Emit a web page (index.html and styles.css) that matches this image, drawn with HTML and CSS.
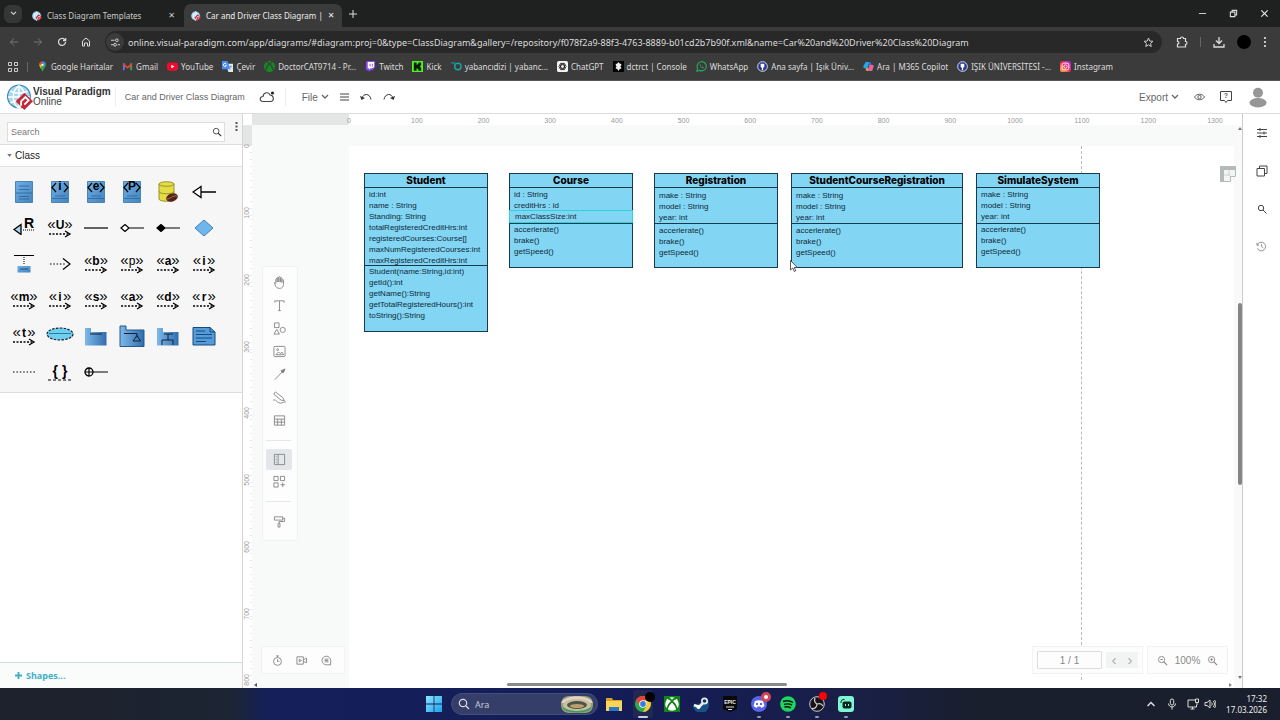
FILE: index.html
```html
<!DOCTYPE html>
<html lang="en">
<head>
<meta charset="utf-8">
<title>Car and Driver Class Diagram | Visual Paradigm Online</title>
<link rel="stylesheet" href="styles.css">
</head>
<body>
<svg class="defs" aria-hidden="true">
  <defs>
    <linearGradient id="blue" x1="0" y1="0" x2="1" y2="1"><stop offset="0" stop-color="#6fb0e6"/><stop offset="1" stop-color="#4483bd"/></linearGradient>
    <linearGradient id="folder" x1="0" y1="0" x2="1" y2="0"><stop offset="0" stop-color="#80b8e8"/><stop offset="1" stop-color="#2f6dae"/></linearGradient>
    <linearGradient id="insta" x1="0" y1="1" x2="1" y2="0"><stop offset="0" stop-color="#ffc233"/><stop offset=".5" stop-color="#f2265d"/><stop offset="1" stop-color="#a227e0"/></linearGradient>
    <linearGradient id="win" x1="0" y1="0" x2="1" y2="1"><stop offset="0" stop-color="#8be4fd"/><stop offset="1" stop-color="#1ba3ea"/></linearGradient>
    <symbol id="vp" viewBox="0 0 24 24">
      <circle cx="11" cy="11.500" r="10.500" fill="#a9d8ec" stroke="#3b8fb8" stroke-width="1.200"/>
      <path d="M1 12h20M11 1.500v21M3 6.500c5 2.500 11 2.500 16 0M3 17.500c5-2.500 11-2.500 16 0M11 1.500c-7 5-7 16 0 21M11 1.500c7 5 7 16 0 21" fill="none" stroke="#fff" stroke-width="1.300"/>
      <path d="M16 8l8 8-8 8-8-8z" fill="#c3283a"/>
      <path d="M13 20v-4l4-4 3 3-4 4" fill="none" stroke="#fff" stroke-width="1.700"/>
    </symbol>
    <symbol id="arrow" viewBox="0 0 24 8"><path d="M1 4h19" stroke="#000" stroke-width="1.400" stroke-dasharray="2 1.500"/><path d="M17 1l5 3-5 3" fill="none" stroke="#000" stroke-width="1.300"/></symbol>
    <symbol id="classbox" viewBox="0 0 18 22"><path d="M.5.5h17v21H.5z" fill="url(#blue)" stroke="#4a84b8"/><path d="M4 5h10M4 8.500h10M1 12h16M4 15.500h10M4 18h10" stroke="#2f6294" stroke-width=".8"/></symbol>
    <symbol id="angles" viewBox="0 0 18 22"><path d="M.5.5h17v21H.5z" fill="url(#blue)" stroke="#4a84b8"/><path d="M4 15h10M1 17.500h16" stroke="#2f6294" stroke-width=".8"/><path d="M5 2L1 6.500 5 11M13 2l4 4.500-4 4.500" fill="none" stroke="#000" stroke-width="1.200"/></symbol>
    <symbol id="lens" viewBox="0 0 12 12"><circle cx="5" cy="5" r="3.400" fill="none" stroke="currentColor"/><path d="M7.500 7.500L11 11" stroke="currentColor" stroke-width="1.300"/></symbol>
    <symbol id="crest" viewBox="0 0 12 12"><circle cx="6" cy="6" r="5.300" fill="#28368f" stroke="#e4e7f7"/><path d="M4 3h4v3.500L6 8 4 6.500zM5.300 7h1.400v3H5.300z" fill="#fff"/></symbol>
    <symbol id="chev" viewBox="0 0 8 6"><path d="M1 1l3 3 3-3" fill="none" stroke="currentColor" stroke-width="1.300"/></symbol>
  </defs>
</svg>

<header class="browser">
  <div class="tabs">
    <button class="tab-menu" aria-label="Search tabs"><svg width="7" height="5"><use href="#chev"/></svg></button>
    <div class="tab">
      <svg width="10" height="10"><use href="#vp"/></svg><span class="tab-title">Class Diagram Templates</span><button class="plain" aria-label="Close tab">✕</button>
    </div>
    <div class="tab active">
      <svg width="10" height="10"><use href="#vp"/></svg><span class="tab-title">Car and Driver Class Diagram |</span><button class="plain" aria-label="Close tab">✕</button>
    </div>
    <button class="plain new-tab" aria-label="New tab"><svg viewBox="0 0 8 8" width="8" height="8"><path d="M4 0v8M0 4h8" stroke="#ddd"/></svg></button>
    <div class="win-buttons">
      <button class="plain" aria-label="Minimize"><svg viewBox="0 0 10 10" width="9" height="9"><path d="M1 5h8" stroke="#ddd"/></svg></button>
      <button class="plain" aria-label="Restore"><svg viewBox="0 0 10 10" width="9" height="9"><path d="M1.500 3.500h5v5h-5zM3.500 3V1.500h5v5H7" fill="none" stroke="#ddd" stroke-width="1.200"/></svg></button>
      <button class="plain" aria-label="Close"><svg viewBox="0 0 10 10" width="9" height="9"><path d="M1.500 1.500l7 7M8.500 1.500l-7 7" stroke="#eee" stroke-width="1.200"/></svg></button>
    </div>
  </div>
  <div class="nav">
    <button class="plain" aria-label="Back"><svg viewBox="0 0 10 10" width="10" height="10"><path d="M9 5H1.500M5 1.500L1.500 5 5 8.500" fill="none" stroke="#777"/></svg></button>
    <button class="plain" aria-label="Forward"><svg viewBox="0 0 10 10" width="10" height="10"><path d="M1 5h7.500M5 1.500L8.500 5 5 8.500" fill="none" stroke="#777"/></svg></button>
    <button class="plain" aria-label="Reload"><svg viewBox="0 0 10 10" width="10" height="10"><path d="M8.500 5a3.500 3.500 0 1 1-1-2.500L8.500 3.500M8.700 1v2.700H6" fill="none" stroke="#ddd" stroke-width="1.200"/></svg></button>
    <button class="plain" aria-label="Home"><svg viewBox="0 0 10 10" width="10" height="10"><path d="M1.500 9V4L5 1l3.500 3v5h-2V6h-3v3z" fill="none" stroke="#ddd"/></svg></button>
    <div class="omnibox">
      <button class="site" aria-label="Site information"><svg viewBox="0 0 10 10" width="9" height="9"><path d="M0 2.500h4M7.500 7.500H10M0 7.500h3" stroke="#ddd"/><circle cx="6.500" cy="2.500" r="1.500" fill="none" stroke="#ddd"/><circle cx="4.500" cy="7.500" r="1.500" fill="none" stroke="#ddd"/></svg></button>
      <input class="url" aria-label="Address" value="online.visual-paradigm.com/app/diagrams/#diagram:proj=0&amp;type=ClassDiagram&amp;gallery=/repository/f078f2a9-88f3-4763-8889-b01cd2b7b90f.xml&amp;name=Car%20and%20Driver%20Class%20Diagram">
      <button class="plain" aria-label="Bookmark"><svg viewBox="0 0 12 12" width="11" height="11"><path d="M6 1.200l1.400 3.200 3.400.3-2.600 2.300.8 3.400L6 8.600l-3 1.800.8-3.400L1.200 4.700l3.400-.3z" fill="none" stroke="#ddd"/></svg></button>
    </div>
    <div class="nav-right">
      <button class="plain" aria-label="Extensions"><svg viewBox="0 0 12 12" width="12" height="12"><path d="M1.500 2.500h3c0-2 3-2 3 0h2v3c2 0 2 3 0 3v2.500h-8V8c2 0 2-2.500 0-2.500z" fill="none" stroke="#ddd" stroke-width="1.200"/></svg></button>
      <i class="bar"></i>
      <button class="plain" aria-label="Downloads"><svg viewBox="0 0 12 12" width="12" height="12"><path d="M6 1v6M3 4.500l3 3 3-3M1 8v3h10V8" fill="none" stroke="#ddd" stroke-width="1.300"/></svg></button>
      <button class="profile" aria-label="Profile"></button>
      <button class="plain" aria-label="Menu"><svg viewBox="0 0 4 12" width="4" height="12"><path d="M2 1v2M2 5v2M2 9v2" stroke="#ddd" stroke-width="1.700"/></svg></button>
    </div>
  </div>
  <nav class="bookmarks">
    <button class="plain" aria-label="Apps"><svg viewBox="0 0 10 10" width="10" height="10"><path d="M.5.5h3v3h-3zM6.500.5h3v3h-3zM.5 6.500h3v3h-3zM6.500 6.500h3v3h-3z" fill="none" stroke="#ccc"/></svg></button>
    <i class="bar"></i>
    <a href="#"><svg viewBox="0 0 12 12"><path d="M6 12C5.500 9 2.500 7.500 2.500 4.200A3.500 3.500 0 0 1 6 .5a3.500 3.500 0 0 1 3.500 3.700C9.500 7.500 6.500 9 6 12z" fill="#34a853"/><path d="M2.500 4.200A3.500 3.500 0 0 1 6 .5v3.700z" fill="#ea4335"/><path d="M6 .5a3.500 3.500 0 0 1 3.500 3.700H6z" fill="#4285f4"/><path d="M2.500 4.200H6L4 8z" fill="#fbbc04"/><circle cx="6" cy="4.200" r="1.200" fill="#fff"/></svg>Google Haritalar</a>
    <a href="#"><svg viewBox="0 0 12 12"><path d="M1 2.500h2V10H1z" fill="#4285f4"/><path d="M9 2.500h2V10H9z" fill="#34a853"/><path d="M1 2l5 4 5-4v2.500L6 8.500l-5-4z" fill="#ea4335"/></svg>Gmail</a>
    <a href="#"><svg viewBox="0 0 12 12"><rect y="1.500" width="12" height="9" rx="2.500" fill="#f10b2b"/><path d="M4.700 4l3.500 2-3.500 2z" fill="#fff"/></svg>YouTube</a>
    <a href="#"><svg viewBox="0 0 12 12"><path d="M4 3h8v9H7z" fill="#e5e7ea"/><path d="M0 0h6l3 9H0z" fill="#4b8bf5"/><path d="M4.500 3.200a1.700 1.700 0 1 0 .3 1.600H3.500" fill="none" stroke="#fff"/><path d="M8 6h3M9.500 5l-1 4" stroke="#5a7eb5" stroke-width=".7"/></svg>Çevir</a>
    <a href="#"><svg viewBox="0 0 12 12"><circle cx="6" cy="6" r="6" fill="#168a22"/><path d="M2 10c1-4 2.500-6 4-7 1.500 1 3 3 4 7M3 1.500c1.500 0 3 1.500 3 1.500s1.500-1.500 3-1.500" fill="none" stroke="#30463a" stroke-width="1.600"/></svg>DoctorCAT9714 - Pr...</a>
    <a href="#"><svg viewBox="0 0 12 12"><path d="M2 0h9v7l-3 3H6l-2 2v-2H1V2z" fill="#8b45f7"/><path d="M3 1h7v5.500L8 8H6L4.500 9.500V8H3z" fill="#fff"/><path d="M5.500 3v3M8 3v3" stroke="#8b45f7"/></svg>Twitch</a>
    <a href="#"><svg viewBox="0 0 12 12"><path d="M0 0h12v12H0z" fill="#4df51d"/><path d="M2 1.500h3V4h1V3h1V1.500h3V5H9v2h1v3.500H7V9H6V8H5v2.500H2z" fill="#101b0d"/></svg>Kick</a>
    <a href="#"><svg viewBox="0 0 12 12"><path d="M0 2h4l1 3" fill="none" stroke="#13918c" stroke-width="1.500"/><circle cx="7.500" cy="6" r="3.500" fill="none" stroke="#19a39d" stroke-width="1.600"/></svg>yabancıdizi | yabanc...</a>
    <a href="#"><svg viewBox="0 0 12 12"><rect width="12" height="12" rx="2" fill="#f4f4f4"/><g fill="none" stroke="#222" stroke-width=".9"><ellipse cx="6" cy="6" rx="4" ry="2"/><ellipse cx="6" cy="6" rx="4" ry="2" transform="rotate(60 6 6)"/><ellipse cx="6" cy="6" rx="4" ry="2" transform="rotate(120 6 6)"/></g></svg>ChatGPT</a>
    <a href="#"><svg viewBox="0 0 12 12"><path d="M0 0h12v12H0z"/><path d="M6 1l1.500 2H9v2L8 6l1 1v1.500H7.500L6 11 4.500 8.500H3V7l1-1-1-1V3h1.500z" fill="#eee"/></svg>dctrct | Console</a>
    <a href="#"><svg viewBox="0 0 12 12"><path d="M1 11l.8-3A5 5 0 1 1 4 10.200z" fill="none" stroke="#24a75a" stroke-width="1.300"/><path d="M4 4c0 2 2 4 4 4l.5-1.200-1.500-.7-.7.700C5.500 6.500 5 6 5 5.300L5.500 5 5 3.500z" fill="#24a75a"/></svg>WhatsApp</a>
    <a href="#"><svg viewBox="0 0 12 12"><use href="#crest"/></svg>Ana sayfa | Işık Üniv...</a>
    <a href="#"><svg viewBox="0 0 12 12"><path d="M3 1h4L5 8H2C0 8 0 6 1 4z" fill="#23a8e6"/><path d="M7 1c2 0 2 1 2 3H6z" fill="#3669d9"/><path d="M7 4h3c2 0 2 2 1 4l-1 3H5z" fill="#e661a0"/><path d="M3 8h3l-1 3C3 11 3 10 3 8z" fill="#f0a83d"/></svg>Ara | M365 Copilot</a>
    <a href="#"><svg viewBox="0 0 12 12"><use href="#crest"/></svg>IŞIK ÜNİVERSİTESİ -...</a>
    <a href="#"><svg viewBox="0 0 12 12"><rect width="12" height="12" rx="2.500" fill="url(#insta)"/><rect x="2.300" y="2.300" width="7.400" height="7.400" rx="2" fill="none" stroke="#fff"/><circle cx="6" cy="6" r="1.800" fill="none" stroke="#fff"/></svg>Instagram</a>
  </nav>
</header>

<div class="app">
  <header class="app-bar">
    <a class="brand" href="#"><svg width="26" height="26"><use href="#vp"/></svg><span><b>Visual Paradigm</b>Online</span></a>
    <span class="doc-name">Car and Driver Class Diagram</span>
    <svg class="cloud" viewBox="0 0 16 12" width="16" height="12"><path d="M4 10.500c-4 0-3.500-5 0-5C4.500 1 10 .5 11 4c4 0 4.500 6 1 6.500z" fill="none" stroke="#444" stroke-width="1.100"/><circle cx="13.500" cy="2" r="1.600" fill="#222"/></svg>
    <div class="file-tools">
      <button class="menu-btn">File <svg width="8" height="6"><use href="#chev"/></svg></button>
      <button class="plain" aria-label="Menu"><svg viewBox="0 0 9 8" width="9" height="8"><path d="M0 1h9M0 4h9M0 7h9" stroke="#444"/></svg></button>
      <button class="plain" aria-label="Undo"><svg viewBox="0 0 12 10" width="12" height="10"><path d="M2 6.500C3 1 10 1 11 7.500" fill="none" stroke="#333"/><path d="M0 4l1.500 4L5 6z" fill="#333"/></svg></button>
      <button class="plain" aria-label="Redo"><svg viewBox="0 0 12 10" width="12" height="10"><path d="M10 6.500C9 1 2 1 1 7.500" fill="none" stroke="#333"/><path d="M12 4l-1.500 4L7 6z" fill="#333"/></svg></button>
    </div>
    <div class="app-right">
      <button class="menu-btn">Export <svg width="8" height="6"><use href="#chev"/></svg></button>
      <button class="plain" aria-label="Preview"><svg viewBox="0 0 12 8" width="11" height="8"><path d="M.5 4C3 0 9 0 11.500 4 9 8 3 8 .5 4z" fill="none" stroke="#555"/><circle cx="6" cy="4" r="1.800" fill="none" stroke="#555"/></svg></button>
      <button class="plain help" aria-label="Help"><svg viewBox="0 0 12 12" width="12" height="12"><path d="M.5.5h11v9H7.500L6 11.500 4.500 9.500h-4z" fill="none" stroke="#444"/></svg><b>?</b></button>
      <svg class="avatar" viewBox="0 0 18 22" width="18" height="21"><circle cx="9" cy="6" r="5.200" fill="#969696"/><ellipse cx="9" cy="16.500" rx="9" ry="5" fill="#969696"/></svg>
    </div>
  </header>

  <div class="body">
    <aside class="sidebar">
      <div class="search-row">
        <label class="search"><input type="text" placeholder="Search" aria-label="Search shapes"><svg width="10" height="10"><use href="#lens"/></svg></label>
        <button class="plain" aria-label="Options"><svg viewBox="0 0 3 9" width="3" height="9"><path d="M1.500 0v2M1.500 3.500v2M1.500 7v2" stroke="#555" stroke-width="2"/></svg></button>
      </div>
      <button class="section"><svg viewBox="0 0 6 4" width="5" height="3"><path d="M0 0h6L3 4z" fill="#777"/></svg>Class</button>
      <div class="palette">
        <div class="shape"><svg width="18" height="22"><use href="#classbox"/></svg></div>
        <div class="shape over"><svg width="18" height="22"><use href="#angles"/></svg><b>i</b></div>
        <div class="shape over"><svg width="18" height="22"><use href="#angles"/></svg><b>e</b></div>
        <div class="shape over"><svg width="18" height="22"><use href="#angles"/></svg><b>P</b></div>
        <div class="shape"><svg viewBox="0 0 20 22" width="20" height="22"><path d="M1 3c0-3 15-3 15 0v15c0 3-15 3-15 0z" fill="#e3dc45" stroke="#98922a"/><path d="M1 3c0 3 15 3 15 0M1 10.500c0 3 15 3 15 0" fill="none" stroke="#98922a"/><ellipse cx="14" cy="16.500" rx="6" ry="4" fill="#542313" transform="rotate(-20 14 16.500)"/><path d="M9 18c3 0 6-4 10-3" fill="none" stroke="#a8735a"/></svg></div>
        <div class="shape"><svg viewBox="0 0 24 14" width="24" height="14"><path d="M1 7l8-5.500v11zM9 7h15" fill="#fff" stroke="#000" stroke-width="1.300"/></svg></div>

        <div class="shape real"><svg viewBox="0 0 22 14" width="22" height="14"><path d="M1 8.500l7-5v10z" fill="#a8d5f2" stroke="#000" stroke-width="1.300"/><path d="M10 9h12" stroke="#000" stroke-dasharray="1 1"/></svg><b>R</b></div>
        <div class="shape dep"><span>«<b>U</b>»</span><svg width="24" height="8"><use href="#arrow"/></svg></div>
        <div class="shape"><svg viewBox="0 0 24 4" width="24" height="4"><path d="M0 2h24" stroke="#000" stroke-width="1.200"/></svg></div>
        <div class="shape"><svg viewBox="0 0 24 8" width="24" height="8"><path d="M1 4l4-3.500 4 3.500-4 3.500zM9 4h15" fill="#fff" stroke="#000" stroke-width="1.200"/></svg></div>
        <div class="shape"><svg viewBox="0 0 24 8" width="24" height="8"><path d="M1 4l4-3.500 4 3.500-4 3.500zM9 4h15" stroke="#000" stroke-width="1.200"/></svg></div>
        <div class="shape"><svg viewBox="0 0 20 18" width="20" height="18"><path d="M10 1l9 8-9 8-9-8z" fill="#6eb6ec" stroke="#3c7fb8"/></svg></div>

        <div class="shape"><svg viewBox="0 0 20 20" width="20" height="20"><path d="M0 1.500h20" stroke="#000"/><path d="M10 3v8" stroke="#000" stroke-dasharray="1 1"/><path d="M3.500 12h13v6.500h-13z" fill="url(#blue)"/><path d="M6 15h8" stroke="#234f7c"/></svg></div>
        <div class="shape"><svg viewBox="0 0 22 14" width="22" height="14"><path d="M1 7h15" stroke="#000" stroke-width="1.200" stroke-dasharray="1.500 1.800"/><path d="M14 1.500L21 7l-7 5.500" fill="none" stroke="#000" stroke-width="1.200"/></svg></div>
        <div class="shape dep"><span>«<b>b</b>»</span><svg width="24" height="8"><use href="#arrow"/></svg></div>
        <div class="shape dep"><span>«<small>p</small>»</span><svg width="24" height="8"><use href="#arrow"/></svg></div>
        <div class="shape dep"><span>«<b>a</b>»</span><svg width="24" height="8"><use href="#arrow"/></svg></div>
        <div class="shape dep"><span>«&#8202;<b>i</b>&#8202;»</span><svg width="24" height="8"><use href="#arrow"/></svg></div>

        <div class="shape dep"><span>«<b>m</b>»</span><svg width="24" height="8"><use href="#arrow"/></svg></div>
        <div class="shape dep"><span>«&#8202;<b>i</b>&#8202;»</span><svg width="24" height="8"><use href="#arrow"/></svg></div>
        <div class="shape dep"><span>«<b>s</b>»</span><svg width="24" height="8"><use href="#arrow"/></svg></div>
        <div class="shape dep"><span>«<b>a</b>»</span><svg width="24" height="8"><use href="#arrow"/></svg></div>
        <div class="shape dep"><span>«<b>d</b>»</span><svg width="24" height="8"><use href="#arrow"/></svg></div>
        <div class="shape dep"><span>«&#8202;<b>r</b>&#8202;»</span><svg width="24" height="8"><use href="#arrow"/></svg></div>

        <div class="shape dep"><span>«&#8202;<b>t</b>&#8202;»</span><svg width="24" height="8"><use href="#arrow"/></svg></div>
        <div class="shape"><svg viewBox="0 0 28 18" width="28" height="18"><ellipse cx="14" cy="7" rx="13" ry="6" fill="#6fd0ee" stroke="#123" stroke-width="1.200" stroke-dasharray="2.500 1.300"/><path d="M3 6.500h22" stroke="#287fa0"/></svg></div>
        <div class="shape"><svg viewBox="0 0 24 20" width="24" height="20"><path d="M1 2h6v4h15.500v13.500H1z" fill="url(#folder)"/><path d="M6 8h12" stroke="#123"/></svg></div>
        <div class="shape"><svg viewBox="0 0 26 22" width="26" height="22"><path d="M1 1h6v4h18v16.500H1z" fill="url(#folder)" stroke="#23598f"/><path d="M5 8.500h13v4M18 10.500l-4 5.500h7.500z" fill="none" stroke="#123"/></svg></div>
        <div class="shape"><svg viewBox="0 0 24 20" width="24" height="20"><path d="M1 2h6v4h15.500v13.500H1z" fill="url(#folder)"/><path d="M8 8h9M12 8v6M6 19v-5h11v5" fill="none" stroke="#123"/></svg></div>
        <div class="shape"><svg viewBox="0 0 24 20" width="24" height="20"><path d="M1 1.500h17l5 4.500v13H1z" fill="#559bd9" stroke="#174b7c"/><path d="M18 1.500V6h5M4 5h9M4 8.500h16M4 12h16M4 15.500h10" fill="none" stroke="#174b7c"/></svg></div>

        <div class="shape"><svg viewBox="0 0 22 4" width="22" height="4"><path d="M0 2h22" stroke="#000" stroke-dasharray="1.500 1.900"/></svg></div>
        <div class="shape braces"><b>{ }</b><svg viewBox="0 0 24 2" width="24" height="2"><path d="M0 1h24" stroke="#000" stroke-dasharray="3 2"/></svg></div>
        <div class="shape"><svg viewBox="0 0 24 10" width="24" height="10"><path d="M1 5h23M5 1v8" stroke="#000" stroke-width="1.200"/><circle cx="5" cy="5" r="4" fill="none" stroke="#000" stroke-width="1.300"/></svg></div>
      </div>
      <button class="more-shapes"><svg viewBox="0 0 7 7" width="7" height="7"><path d="M3.500 0v7M0 3.500h7" stroke="#3fb0c4" stroke-width="1.800"/></svg>Shapes...</button>
    </aside>

    <main class="workspace">
      <div class="ruler-h">
        <i class="ruler-off"></i>
        <div class="ticks-h"><span>100</span><span>200</span><span>300</span><span>400</span><span>500</span><span>600</span><span>700</span><span>800</span><span>900</span><span>1000</span><span>1100</span><span>1200</span><span>1300</span></div>
        <b class="zero">0</b>
      </div>
      <div class="ruler-v">
        <i class="ruler-off"></i>
        <div class="ticks-v"><span>100</span><span>200</span><span>300</span><span>400</span><span>500</span><span>600</span><span>700</span><span>800</span></div>
        <b class="zero">0</b>
      </div>
      <div class="stage">
        <div class="sheet"></div>
        <i class="page-edge"></i>

        <section class="uml student">
          <h2>Student</h2>
          <ul><li>id:int</li><li>name : String</li><li>Standing: String</li><li>totalRegisteredCreditHrs:int</li><li>registeredCourses:Course[]</li><li>maxNumRegisteredCourses:int</li><li>maxRegisteredCreditHrs:int</li></ul>
          <ul><li>Student(name:String,id:int)</li><li>getId():int</li><li>getName():String</li><li>getTotalRegisteredHours():int</li><li>toString():String</li></ul>
        </section>
        <section class="uml course">
          <h2>Course</h2>
          <ul><li>id : String</li><li>creditHrs : id</li><li class="selected">maxClassSize:int</li></ul>
          <ul><li>accerlerate()</li><li>brake()</li><li>getSpeed()</li></ul>
        </section>
        <section class="uml low registration">
          <h2>Registration</h2>
          <ul><li>make : String</li><li>model : String</li><li>year: int</li></ul>
          <ul><li>accerlerate()</li><li>brake()</li><li>getSpeed()</li></ul>
        </section>
        <section class="uml low enrolment">
          <h2>StudentCourseRegistration</h2>
          <ul><li>make : String</li><li>model : String</li><li>year: int</li></ul>
          <ul><li>accerlerate()</li><li>brake()</li><li>getSpeed()</li></ul>
        </section>
        <section class="uml simulate">
          <h2>SimulateSystem</h2>
          <ul><li>make : String</li><li>model : String</li><li>year: int</li></ul>
          <ul><li>accerlerate()</li><li>brake()</li><li>getSpeed()</li></ul>
        </section>
        <svg class="cursor" viewBox="0 0 8 12" width="8" height="12"><path d="M.5.500v9.500l2.300-2 1.500 3.500 1.500-.7-1.500-3.300h3z" fill="#fff" stroke="#333" stroke-width=".8"/></svg>

        <div class="tools">
          <button aria-label="Pan"><svg viewBox="0 0 14 14"><path d="M3 8V3.500c0-1 1.500-1 1.500 0V6.500V2c0-1 1.700-1 1.700 0v4.500V1.500c0-1 1.700-1 1.700 0v5V2.500c0-1 1.700-1 1.700 0v4.500V4.500c0-1 1.700-1 1.700 0V9c0 5-6 5.500-8 2.500L1.500 8c-.5-1 .7-1.500 1.500-.5z"/></svg></button>
          <button aria-label="Text"><svg viewBox="0 0 14 14"><path d="M2 4V2h10v2M7 2v10.500M5.500 12.500h3"/></svg></button>
          <button aria-label="Shapes"><svg viewBox="0 0 14 14"><path d="M1.500 1h5v5h-5zM4 8l3 5H1z"/><circle cx="10.500" cy="8.500" r="2.800"/></svg></button>
          <button aria-label="Image"><svg viewBox="0 0 14 14"><rect x="1" y="1.500" width="12" height="11" rx="1"/><path d="M3 10.500l3-3 2 2 1.500-2 2 3z"/><circle cx="5" cy="5" r="1"/></svg></button>
          <button aria-label="Connector"><svg viewBox="0 0 14 14"><path d="M2 12.500L12 2" /><path d="M13 1L8.500 3l2.500 2.500z" fill="#777"/></svg></button>
          <button aria-label="Pen"><svg viewBox="0 0 14 14"><path d="M2.500 1l8 6 1.800 3.500-3.700-.7L1 3.500zM0 10c3-2 4 3 8 3 3 0 4-2 6-1"/></svg></button>
          <button aria-label="Table"><svg viewBox="0 0 14 14"><path d="M1.500 2h11v10h-11zM1.500 5.500h11M1.500 8.700h11M5 5.500V12M9 5.500V12"/></svg></button>
          <hr>
          <button class="on" aria-label="Panel"><svg viewBox="0 0 14 14"><path d="M1.500 1.500h11v11h-11zM5.500 1.500v11M3 4h1M3 7h1M3 10h1"/></svg></button>
          <button aria-label="Add shapes"><svg viewBox="0 0 14 14"><path d="M1 1.500h4.500V6H1zM8 1.500h4.500V6H8zM1 8.500h4.500V13H1zM10.500 8v5M8 10.500h5"/></svg></button>
          <hr>
          <button class="format" aria-label="Format painter"><svg viewBox="0 0 14 14"><path d="M1.500 2h9v3.500h-9zM10.500 3.500h2V7H6.500v2M5.500 9h2v4h-2z"/></svg></button>
        </div>

        <div class="record">
          <button class="plain" aria-label="Timer"><svg viewBox="0 0 12 12"><circle cx="6" cy="7" r="4.300"/><path d="M6 4.500V7h2M4.500 1h3M6 1v1.500"/></svg></button>
          <button class="plain" aria-label="Video"><svg viewBox="0 0 12 12"><path d="M1 2h7v8H1zM8 5l3.500-1.500v5L8 7M3.500 4.500v3L6 6z"/></svg></button>
          <button class="plain" aria-label="Comments"><svg viewBox="0 0 12 12"><path d="M10.500 11V6A4.700 4.700 0 1 0 6 10.700h4.500M4 4.500h4M4 6h4M4 7.500h4"/></svg></button>
        </div>

        <div class="pager">
          <input aria-label="Page" value="1 / 1">
          <div class="steps"><button aria-label="Previous page">‹</button><button aria-label="Next page">›</button></div>
        </div>
        <div class="zoomer">
          <button class="plain" aria-label="Zoom out"><svg viewBox="0 0 12 12" width="11" height="11"><use href="#lens"/><path d="M3.500 5h3" stroke="#888"/></svg></button>
          <span>100%</span>
          <button class="plain" aria-label="Zoom in"><svg viewBox="0 0 12 12" width="11" height="11"><use href="#lens"/><path d="M3.500 5h3M5 3.500v3" stroke="#888"/></svg></button>
        </div>
        <svg class="sticky" viewBox="0 0 16 16" width="16" height="16"><path d="M0 0h16v10l-6 6H0z" fill="#b4bab7"/><path d="M4 4h11v6h-5v5H4z" fill="#f3f5f4"/><path d="M4 9h6M9 4v6" stroke="#cdd2cf"/><path d="M11 15v-4h4z" fill="#fff"/></svg>
        <i class="thumb-h"></i>
        <i class="arr left"></i><i class="arr right"></i>
      </div>
      <div class="scroll-v"><i class="arr up"></i><i class="thumb-v"></i><i class="arr down"></i></div>
    </main>

    <aside class="rail">
      <button class="plain" aria-label="Properties"><svg viewBox="0 0 12 12"><path d="M1 2.500h10M1 6h10M1 9.500h10M4 1v3M8 4.500v3M4 8v3"/></svg></button>
      <button class="plain" aria-label="Pages"><svg viewBox="0 0 12 12"><path d="M1 3.500h7.500V11H1zM3.500 3V1H11v7.500H9"/></svg></button>
      <button class="plain" aria-label="Find"><svg viewBox="0 0 12 12"><circle cx="5" cy="5" r="2.700"/><path d="M7 7l3.500 3.500"/></svg></button>
      <button class="plain light" aria-label="History"><svg viewBox="0 0 12 12"><path d="M1.500 4A4.700 4.700 0 1 1 1.500 8M1 2v2.500h2.500M6 3.500V6l2 1.500"/></svg></button>
    </aside>
  </div>
</div>

<footer class="taskbar">
  <div class="dock">
    <button class="plain" aria-label="Start"><svg viewBox="0 0 16 16"><path d="M0 0h7.600v7.600H0zM8.400 0H16v7.600H8.400zM0 8.400h7.600V16H0zM8.400 8.400H16V16H8.400z" fill="url(#win)"/></svg></button>
    <label class="task-search"><svg viewBox="0 0 12 12" width="12" height="12"><circle cx="5" cy="5" r="3.700" fill="none" stroke="#dde" stroke-width="1.200"/><path d="M8 8l3 3" stroke="#dde" stroke-width="1.300"/></svg><input type="text" placeholder="Ara" aria-label="Ara"><svg class="stadium" viewBox="0 0 32 17" width="32" height="17"><rect width="32" height="17" rx="7" fill="#8aa07a"/><path d="M0 7c3-9 29-9 32 0z" fill="#e8cfc4"/><ellipse cx="16" cy="9" rx="14" ry="6" fill="#c8bfa0"/><ellipse cx="16" cy="9" rx="10" ry="4" fill="#4e5547"/><ellipse cx="16" cy="10" rx="7" ry="2" fill="#b9a26b"/><path d="M2 12c6 5 22 5 28 0" fill="none" stroke="#3f9a5b" stroke-width="1.500"/></svg></label>
    <button class="plain" aria-label="Files"><svg viewBox="0 0 16 16"><path d="M0 2h6l1 2h9v11H0z" fill="#dba125"/><path d="M0 5h16v10H0z" fill="#fcd45a"/><path d="M3 15v-4h10v4z" fill="#2878c8"/></svg></button>
    <button class="plain open main" aria-label="Chrome"><svg viewBox="0 0 16 16"><circle cx="8" cy="8" r="8" fill="#2da94f"/><path d="M1 4A8 8 0 0 1 15 4L8 5 5 10z" fill="#e94335"/><path d="M15 4c3 6-2 12-7 12l4-7-2-5z" fill="#fcc934"/><circle cx="8" cy="8" r="3.800" fill="#fff"/><circle cx="8" cy="8" r="2.900" fill="#3c7be6"/></svg><i class="dot black"></i></button>
    <button class="plain" aria-label="Xbox"><svg viewBox="0 0 16 16"><path d="M0 0h16v16H0z" fill="#118417"/><circle cx="8" cy="8" r="6.800" fill="#fff"/><path d="M3 13c1-4 3-6 5-8 2 2 4 4 5 8M4 2.500C6 2.500 8 5 8 5s2-2.500 4-2.500" fill="none" stroke="#118417" stroke-width="1.800"/></svg></button>
    <button class="plain" aria-label="Steam"><svg viewBox="0 0 16 16"><path d="M0 9a8 8 0 0 0 16 0V5z" fill="#185183"/><path d="M1 9l5 2 5-5" fill="none" stroke="#eee" stroke-width="2.500"/><circle cx="11.500" cy="5" r="3.500" fill="#e9edf2"/><circle cx="11.500" cy="5" r="1.800" fill="#123252"/><circle cx="5.500" cy="11" r="2" fill="#fff"/></svg></button>
    <button class="plain epic" aria-label="Epic"><svg viewBox="0 0 16 16"><path d="M1 0h14v13l-7 3-7-3z" fill="#090909"/><path d="M4 11h8M6 13.500h4" stroke="#ddd"/></svg><b>EPIC</b></button>
    <button class="plain open" aria-label="Discord"><svg viewBox="0 0 16 16"><circle cx="8" cy="8" r="8" fill="#5865e8"/><path d="M4 5c3-1 5-1 8 0l1.500 5-3 2-1-1.500h-3L5.500 12l-3-2z" fill="#fff"/><path d="M5 8h2M9 8h2" stroke="#5865e8" stroke-width="1.800"/></svg><i class="dot rec"></i></button>
    <button class="plain open" aria-label="Spotify"><svg viewBox="0 0 16 16"><circle cx="8" cy="8" r="7.800" fill="#1ed760"/><path d="M3 5.500c3-1 7-1 10 1M4 8.500c3-1 6-.5 8 .7M4.500 11c2.500-.5 5 0 6.500 1" fill="none" stroke="#111" stroke-width="1.400"/></svg></button>
    <button class="plain open" aria-label="OBS"><svg viewBox="0 0 16 16"><circle cx="8" cy="8" r="7.300" fill="#17151c" stroke="#ccc"/><path d="M6 2c-1 3 0 5 2 6 3-1 5 0 6 2M8 8c0 3-2 5-5 4.500" fill="none" stroke="#ccc" stroke-width="1.300"/></svg><i class="dot red"></i></button>
    <button class="plain open" aria-label="Streamlabs"><svg viewBox="0 0 16 16"><rect width="16" height="16" rx="3" fill="#80f5d2"/><rect x="4.500" y="5.500" width="9" height="7" rx="2" fill="#08251e"/><path d="M3 7c0-3 1-3.500 3.500-3.500" fill="none" stroke="#08251e"/><path d="M7.500 8v2M10.500 8v2" stroke="#80f5d2"/></svg></button>
  </div>
  <div class="tray">
    <svg viewBox="0 0 12 12"><path d="M2.500 8L6 4.500 9.500 8" stroke-width="1.500"/></svg>
    <svg class="mic" viewBox="0 0 12 12"><rect x="4.300" y="1" width="3.400" height="6" rx="1.700"/><path d="M2.500 5.500c0 4.500 7 4.500 7 0M6 9v2.500"/></svg>
    <svg viewBox="0 0 12 12"><path d="M8 2H1v7h8.500V7M3.500 11h4M5.500 9v2M8.500 1h3v3.500h-3zM10 4.500V7"/></svg>
    <svg viewBox="0 0 12 12"><path d="M1 4.500h2L6 2v8L3 7.500H1zM7.500 4.500c1 1 1 2 0 3M9 3c2 2 2 4 0 6M10.500 2c2 3 2 5 0 8"/></svg>
    <time>17:32<br>17.03.2026</time>
  </div>
</footer>
</body>
</html>
```
FILE: styles.css
```css
* { box-sizing: border-box; }
body {
  margin: 0;
  height: 100vh;
  display: flex;
  flex-direction: column;
  overflow: hidden;
  font-family: "Liberation Sans", Arial, sans-serif;
  font-size: 10px;
  color: #333;
  background: #fff;
}
button, input { font: inherit; color: inherit; border: 0; padding: 0; margin: 0; background: none; }
svg { display: block; flex: none; }
.defs { position: absolute; width: 0; height: 0; }
.plain { display: flex; align-items: center; justify-content: center; }

/* Browser frame */
.browser { background: #3b3b3b; color: #ddd; font-family: "Noto Sans", sans-serif; }
.tabs { display: flex; align-items: center; height: 27px; padding-left: 4px; background: #1f2120; }
.tab-menu { width: 18px; height: 18px; border-radius: 6px; background: #353736; display: flex; align-items: center; justify-content: center; }
.tab { display: flex; align-items: center; gap: 5px; width: 158px; height: 23px; padding: 0 9px 0 6px; margin: 4px 0 0 4px; font-size: 8px; color: #ccc; }
.tab .plain { font-family: "DejaVu Sans", sans-serif; font-size: 8px; }
.tab + .tab { margin-left: 0; padding-left: 7px; }
.tab.active { background: #3b3b3b; border-radius: 7px 7px 0 0; color: #eee; }
.tab-title { flex: 1; white-space: nowrap; }
.new-tab { margin-left: 7px; }
.win-buttons { display: flex; gap: 22px; margin-left: auto; padding-right: 11px; }
.nav { display: flex; align-items: center; gap: 14px; height: 30px; padding: 0 13px 0 9px; }
.omnibox { flex: 1; display: flex; align-items: center; height: 22px; border-radius: 11px; background: #282828; padding: 0 8px 0 1px; }
.site { width: 18px; height: 18px; border-radius: 9px; background: #3b3b3b; display: flex; align-items: center; justify-content: center; }
.url { flex: 1; min-width: 0; margin-left: 4px; font-size: 9px; }
.nav-right { display: flex; align-items: center; gap: 12px; }
.profile { width: 14px; height: 14px; border-radius: 7px; background: #000; }
.bar { width: 1px; height: 10px; background: #666; }
.bookmarks { display: flex; align-items: center; gap: 9px; height: 24px; padding: 0 8px 4px; border-bottom: 1px solid #555; font-size: 8px; }
.bookmarks a { display: flex; align-items: center; gap: 3px; color: #ddd; text-decoration: none; white-space: nowrap; }
.bookmarks a svg { width: 11px; height: 11px; }

/* Application header */
.app { flex: 1; min-height: 0; display: flex; flex-direction: column; }
.app-bar { display: flex; align-items: center; height: 33px; border-bottom: 1px solid #ddd; padding: 0 13px 0 7px; color: #666; }
.brand { display: flex; align-items: center; height: 20px; border-right: 1px solid #eee; padding-right: 4px; color: #444; text-decoration: none; line-height: 10px; }
.brand b { display: block; color: #333; }
.doc-name { margin-left: 9px; font-size: 9px; }
.cloud { margin-left: 14px; }
.file-tools { display: flex; align-items: center; gap: 11px; height: 18px; margin-left: 10px; padding-left: 16px; border-left: 1px solid #eee; }
.menu-btn { display: flex; align-items: center; gap: 3px; }
.app-right { display: flex; align-items: center; gap: 15px; margin-left: auto; }
.avatar { margin-left: 2px; }
.help { position: relative; }
.help b { position: absolute; font-size: 7px; line-height: 8px; top: 1px; }

/* Shape sidebar */
.body { flex: 1; min-height: 0; display: flex; }
.sidebar { width: 243px; display: flex; flex-direction: column; border-right: 1px solid #d5d5d5; }
.search-row { display: flex; align-items: flex-start; justify-content: space-between; height: 31px; padding: 8px 4px 0 7px; background: #f6f6f6; border-bottom: 1px solid #ddd; }
.search { display: flex; align-items: center; width: 218px; height: 20px; padding: 0 2px 0 3px; background: #fff; border: 1px solid #ddd; font-size: 9px; }
.search input { flex: 1; min-width: 0; }
.search input::placeholder { color: #777; }
.section { display: flex; align-items: center; gap: 3px; height: 22px; padding-left: 7px; border-bottom: 1px solid #e3e3e3; color: #222; }
.palette { display: grid; grid-template-columns: repeat(6, 36px); grid-auto-rows: 36px; padding: 7px 0 2px 6px; background: #f6f6f6; border-bottom: 1px solid #ddd; color: #000; }
.shape { display: flex; flex-direction: column; align-items: center; justify-content: center; }
.over { position: relative; }
.over b { position: absolute; top: 5px; font-size: 12px; line-height: 14px; }
.real { position: relative; }
.real b { position: absolute; left: 18px; top: 6px; font-size: 14px; line-height: 14px; }
.dep span { font-size: 15px; line-height: 10px; }
.dep b, .dep small { font-size: 12px; }
.braces b { font-size: 14px; line-height: 16px; }
.more-shapes { display: flex; align-items: center; gap: 4px; height: 26px; margin-top: auto; padding-left: 15px; border-top: 1px solid #d5dada; background: #fafcfc; color: #3fb0c4; font-family: "Open Sans", sans-serif; font-weight: bold; font-size: 9px; }

/* Workspace */
.workspace { flex: 1; min-width: 0; display: grid; grid-template: 11px 1fr / 9px 1fr 4px; }
.ruler-h { grid-column: 1 / 4; position: relative; display: flex; padding-right: 4px; color: #999; font-size: 7px; line-height: 13px; overflow: hidden; }
.ruler-h .ruler-off { width: 97px; margin-left: 9px; background: #e4e6e6; }
.ticks-h { flex: 1; display: grid; grid-template-columns: repeat(13, 3fr) 1fr; }
.ticks-h span { text-align: right; margin-right: -7px; background: repeating-linear-gradient(90deg, #e6e6e6 0 1px, transparent 1px 7px) 0 100% / 100% 2px no-repeat; }
.ruler-h .zero { position: absolute; left: 104px; font-weight: normal; }
.ruler-v { position: relative; display: flex; flex-direction: column; color: #999; font-size: 7px; line-height: 8px; overflow: hidden; }
.ruler-v .ruler-off { height: 21px; background: #e4e6e6; }
.ticks-v { flex: 1; display: grid; grid-template-rows: repeat(8, 1fr); padding-bottom: 8px; }
.ticks-v span { writing-mode: vertical-rl; transform: rotate(180deg); position: relative; top: 6px; background: repeating-linear-gradient(0deg, #e6e6e6 0 1px, transparent 1px 7px) 0 0 / 2px 100% no-repeat; }
.ruler-v .zero { position: absolute; top: 19px; font-weight: normal; writing-mode: vertical-rl; transform: rotate(180deg); }
.stage { position: relative; overflow: hidden; background: #f8f9f9; }
.sheet { height: 100%; margin: 0 4px 0 97px; border-top: 21px solid #f8f9f9; background: #fff; }
.page-edge { position: absolute; left: 829px; top: 21px; bottom: 8px; border-left: 1px dashed #bbb; }
.uml { position: absolute; top: 48px; width: 124px; border: 1px solid #173a4c; background: #82d5f3; color: #102a38; font-size: 8px; line-height: 11px; }
.uml h2 { margin: 0; height: 14px; font-family: Inter, sans-serif; font-size: 10px; line-height: 13px; font-weight: 800; text-align: center; color: #000; border-bottom: 1px solid #173a4c; }
.uml ul { list-style: none; margin: 0; padding: 1px 0 0; height: 35px; }
.uml li { padding-left: 4px; white-space: nowrap; }
.uml ul + ul { border-top: 1px solid #173a4c; height: 44px; padding-top: 0; }
.low ul { padding-top: 2px; }
.low ul + ul { padding-top: 1px; }
.uml .selected { outline: 1px solid #2cd3dc; padding-left: 5px; }
.student { left: 112px; }
.student ul { height: 77px; }
.student ul + ul { height: 66px; }
.course { left: 257px; }
.registration { left: 402px; }
.enrolment { left: 539px; width: 172px; }
.simulate { left: 724px; }
.cursor { position: absolute; left: 538px; top: 135px; }

.tools { position: absolute; left: 10px; top: 141px; width: 36px; padding: 4px 6px 7px 3px; background: #fdfdfd; border: 1px solid #f0f2f2; border-radius: 3px; }
.tools button { display: flex; align-items: center; justify-content: center; width: 26px; height: 23px; border-radius: 2px; }
.tools svg { width: 13px; height: 13px; fill: none; stroke: #888; }
.tools hr { margin: 8px 0; border: 0; border-top: 1px solid #e5e8e8; }
.tools .on { height: 21px; background: #e4e7ea; }
.record, .pager, .zoomer { position: absolute; bottom: 14px; height: 28px; display: flex; align-items: center; background: #fdfdfd; border: 1px solid #f1f3f3; color: #888; }
.record { left: 9px; width: 84px; justify-content: space-around; padding: 0 5px 0 3px; }
.record svg { width: 11px; height: 11px; fill: none; stroke: #888; }
.pager { right: 95px; width: 111px; padding: 0 4px; gap: 4px; font-size: 10px; }
.pager input { width: 65px; height: 18px; border: 1px solid #ddd; border-radius: 2px; text-align: center; }
.steps { display: flex; flex: 1; justify-content: space-around; height: 16px; background: #f2f4f4; font-size: 15px; line-height: 12px; color: #aaa; }
.zoomer { right: 10px; width: 81px; justify-content: center; gap: 7px; font-size: 10px; }
.sticky { position: absolute; left: 968px; top: 41px; }
.thumb-h { position: absolute; left: 255px; bottom: 2px; width: 280px; height: 3px; border-radius: 2px; background: #888d8a; }
.arr { border: 2px solid transparent; }
.left { position: absolute; left: 0; bottom: 1px; border-right: 3px solid #555; }
.right { position: absolute; right: 4px; bottom: 1px; border-left: 3px solid #888; }
.scroll-v { display: flex; flex-direction: column; align-items: center; justify-content: space-between; padding: 0 0 7px; background: #fafafa; }
.up { border-bottom: 3px solid #777; }
.down { border-top: 3px solid #777; }
.thumb-v { width: 4px; height: 182px; margin-bottom: 18px; border-radius: 2px; background: #858585; }
.rail { width: 38px; border-left: 1px solid #ccc; display: flex; flex-direction: column; align-items: center; gap: 26px; padding-top: 13px; }
.rail svg { width: 12px; height: 12px; fill: none; stroke: #444; }
.rail .light svg { stroke: #888; width: 11px; height: 11px; }

/* Taskbar */
.taskbar { display: grid; grid-template-columns: 1fr auto 1fr; align-items: center; height: 32px; background: linear-gradient(90deg, #1e212b 0, #1c2533 18%, #15205a 21%, #141c58 50%, #191f44 68%, #191f2d 76%); color: #eee; font-family: "Noto Sans", sans-serif; }
.dock { grid-column: 2; display: flex; align-items: center; gap: 9px; }
.dock .plain { position: relative; width: 20px; height: 28px; }
.dock .plain svg { width: 16px; height: 16px; }
.task-search { display: flex; align-items: center; gap: 5px; width: 147px; height: 22px; margin-right: -3px; margin-left: -2px; padding: 0 4px 0 6px; border: 1px solid #444f7b; border-radius: 11px; background: #343e68; font-size: 9px; }
.task-search input { flex: 1; min-width: 0; }
.task-search input::placeholder { color: #c5cadb; }
.stadium { border-radius: 7px; }
.open::after { content: ""; position: absolute; bottom: 0; width: 4px; height: 2px; border-radius: 1px; background: #99a; }
.main { background: #222852; border-radius: 3px; }
.main::after { width: 10px; background: #ccd; }
.dot { position: absolute; right: -2px; top: 2px; width: 10px; height: 10px; border-radius: 5px; }
.black { background: #000; }
.red { background: #f00; width: 8px; height: 8px; right: 0; }
.rec { background: #fff; border: 3px solid #d54558; }
.epic b { position: absolute; top: 8px; font-family: "Liberation Sans", sans-serif; font-size: 5px; line-height: 8px; }
.tray { grid-column: 3; display: flex; align-items: center; justify-content: flex-end; gap: 5px; padding-right: 13px; }
.tray svg { width: 12px; height: 12px; fill: none; stroke: #ddd; }
.tray .mic { margin: 0 4px; }
.tray time { margin-left: 5px; font-size: 8px; line-height: 11px; text-align: right; }
```
